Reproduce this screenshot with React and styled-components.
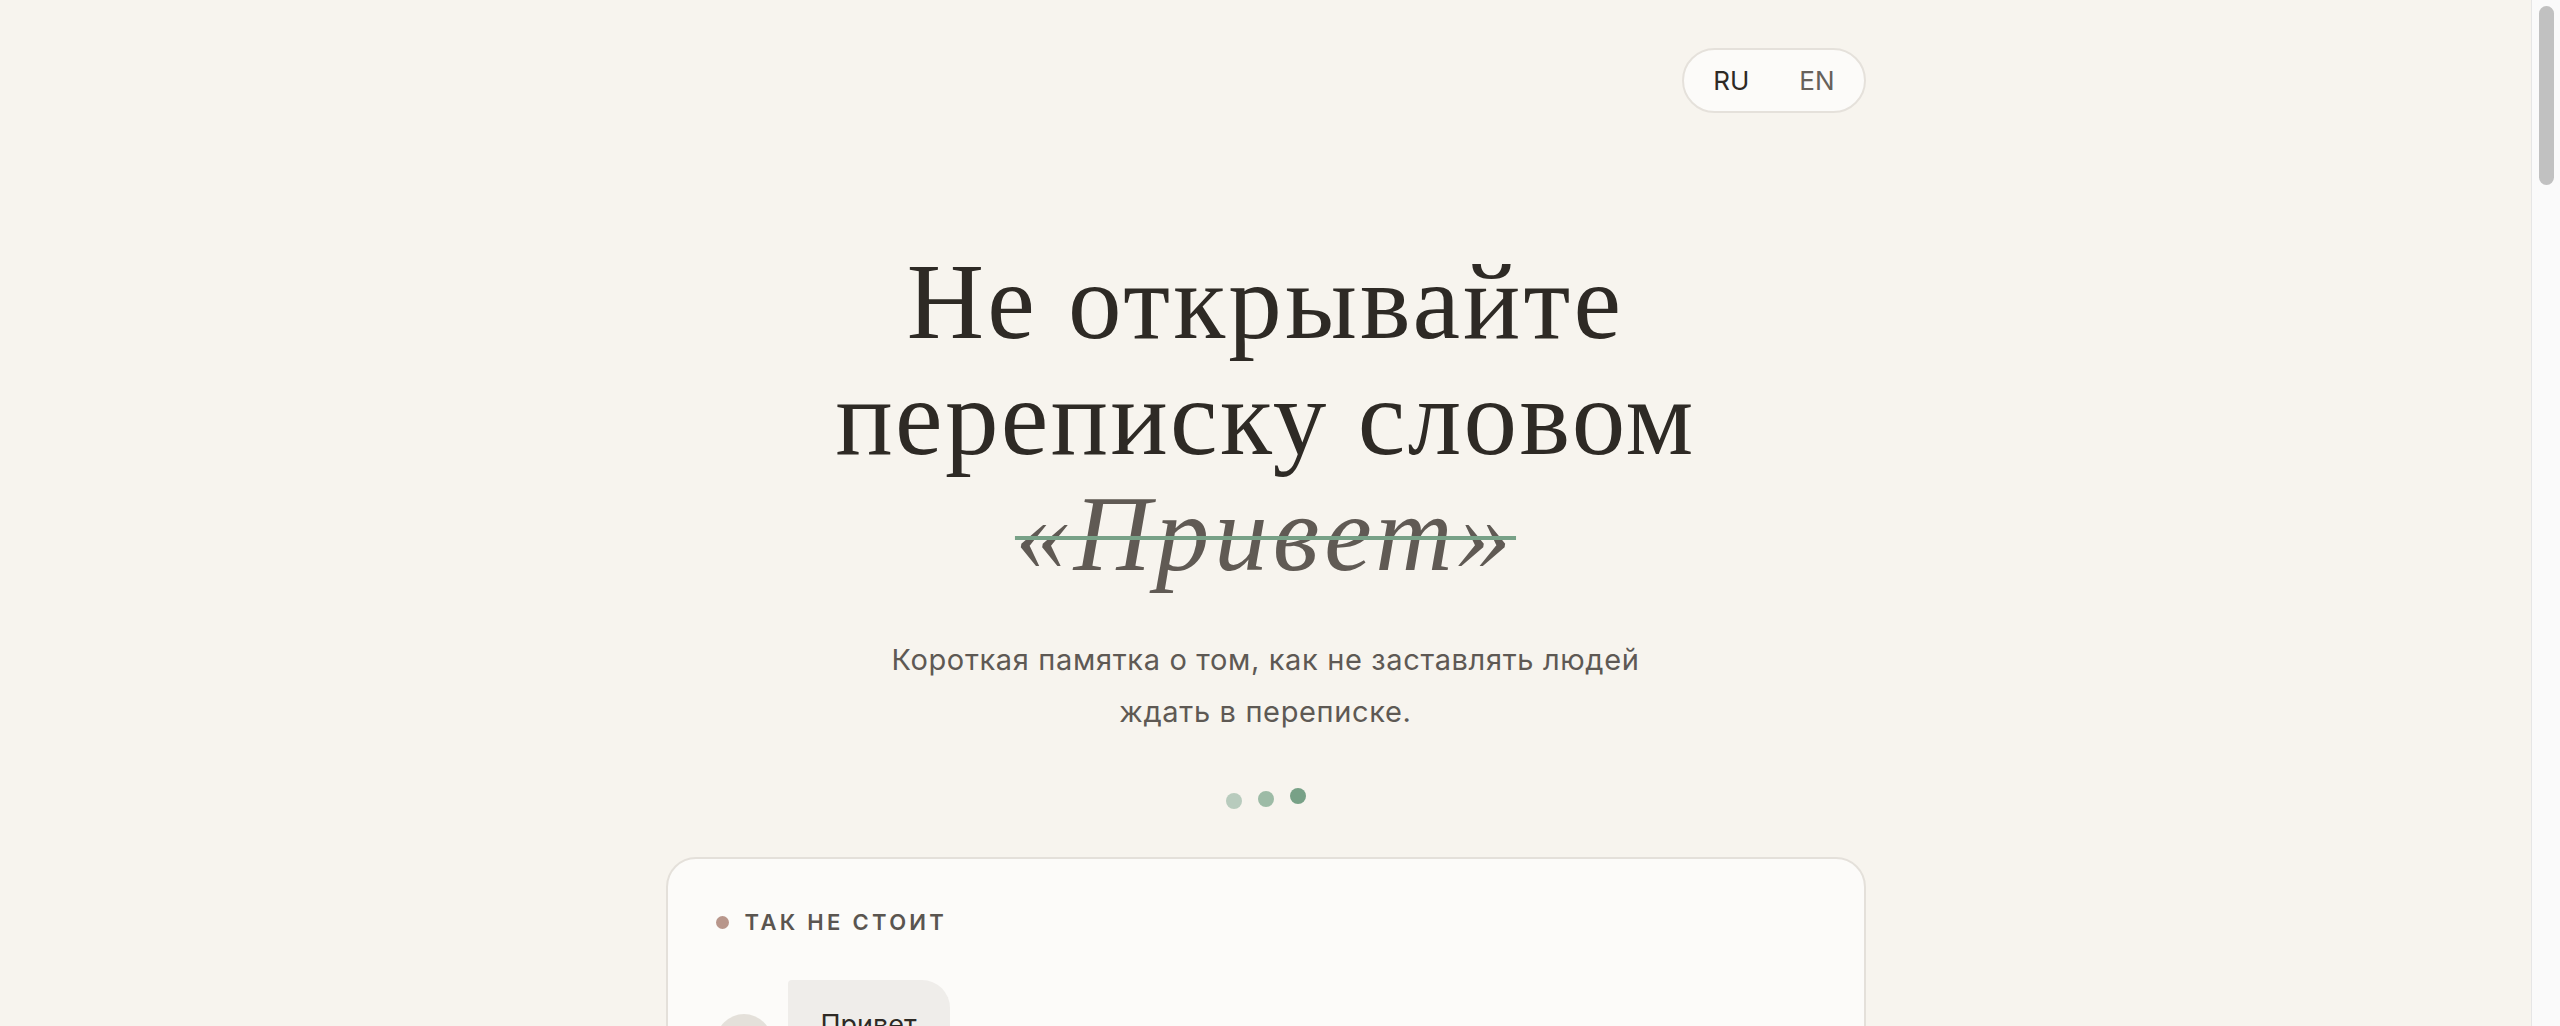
import React from "react";
import styled, { createGlobalStyle } from "styled-components";

const GlobalStyle = createGlobalStyle`
  html, body {
    margin: 0;
    padding: 0;
    height: 100%;
    overflow: hidden;
    background: #f7f4ee;
  }
  body {
    font-family: Inter, "Noto Sans", "Liberation Sans", sans-serif;
    color: #2e2a25;
    -webkit-font-smoothing: antialiased;
  }
  * {
    box-sizing: border-box;
  }
`;

// window frame: scrolling page + the browser's scroll rail on the right
const Shell = styled.div`
  display: flex;
  height: 100vh;
`;

const Main = styled.main`
  flex: 1;
  overflow-y: auto;
  scrollbar-width: none;
  &::-webkit-scrollbar {
    display: none;
  }
`;

const ScrollRail = styled.div`
  flex: none;
  width: 29px;
  padding: 6px 6px 0 7px;
  background: #fafafa;
  border-left: 1px solid #e6e6e6;
`;

const ScrollThumb = styled.div`
  height: 179px;
  border-radius: 8px;
  background: #c1c1c1;
`;

const Page = styled.div`
  min-height: 5500px;
  padding: 48px 0 160px;
`;

const Container = styled.div`
  width: 1200px;
  margin: 0 auto;
`;

const TopBar = styled.header`
  display: flex;
  justify-content: flex-end;
`;

const LangSwitch = styled.div`
  display: flex;
  align-items: center;
  height: 65px;
  padding: 0 4px;
  border: 2px solid #e5e1db;
  border-radius: 40px;
  background: #fcfbf9;
`;

const LangButton = styled.button`
  border: none;
  background: none;
  padding: 0 25px;
  font-family: Inter, "Noto Sans", sans-serif;
  font-size: 26px;
  line-height: 1;
  color: ${(p) => (p.$active ? "#2e2a25" : "#66615b")};
  cursor: pointer;
`;

const Hero = styled.section`
  margin-top: 131px;
  text-align: center;
`;

const Title = styled.h1`
  margin: 0;
  font-family: "Liberation Serif", "DejaVu Serif", serif;
  font-weight: 400;
  font-size: 107px;
  line-height: 116px;
  color: #2e2a25;
  letter-spacing: 2.4px;
`;

const TitleLine = styled.span`
  display: block;
  letter-spacing: ${(p) => p.$spacing || "inherit"};
`;

const Struck = styled.span`
  font-style: italic;
  color: #605a54;
  letter-spacing: 5px;
  text-decoration: line-through;
  text-decoration-color: #78a187;
  text-decoration-thickness: 4px;
`;

const Lead = styled.p`
  margin: 42px auto 0;
  max-width: 800px;
  font-size: 29px;
  line-height: 52px;
  letter-spacing: 0.65px;
  color: #5e5954;
`;

const Typing = styled.div`
  display: flex;
  justify-content: center;
  gap: 16px;
  margin-top: 52px;
`;

const Dot = styled.span`
  width: 16px;
  height: 16px;
  border-radius: 50%;
  background: ${(p) => p.$tone};
  transform: translateY(${(p) => p.$shift}px);
`;

const Card = styled.section`
  margin-top: 51px;
  padding: 52px 48px 56px;
  border: 2px solid #e4e0da;
  border-radius: 30px;
  background: #fcfbf9;
`;

const Label = styled.div`
  display: flex;
  align-items: center;
  gap: 16px;
  font-size: 22px;
  line-height: 22px;
  font-weight: 600;
  letter-spacing: 0.15em;
  text-transform: uppercase;
  color: #5a5550;
`;

const LabelDot = styled.span`
  width: 13px;
  height: 13px;
  border-radius: 50%;
  background: ${(p) => p.$color};
`;

const Thread = styled.div`
  display: flex;
  flex-direction: column;
  gap: 20px;
  margin-top: 47px;
`;

const MessageRow = styled.div`
  display: flex;
  align-items: flex-end;
  gap: 16px;
  flex-direction: ${(p) => (p.$mine ? "row-reverse" : "row")};
`;

const Avatar = styled.div`
  flex: none;
  width: 56px;
  height: 56px;
  border-radius: 50%;
  background: #e4e0da;
`;

const Bubble = styled.div`
  max-width: 720px;
  padding: 25px 33px;
  border-radius: ${(p) => (p.$mine ? "28px 4px 28px 28px" : "4px 28px 28px 28px")};
  background: ${(p) => (p.$mine ? "#e6eee8" : "#efedea")};
  font-size: 27px;
  line-height: 40px;
  color: #2e2a25;
`;

const Note = styled.p`
  margin: 36px 0 0;
  font-size: 24px;
  line-height: 38px;
  color: #7a746d;
`;

const Tips = styled.ol`
  margin: 40px 0 0;
  padding: 0 0 0 36px;
  font-size: 27px;
  line-height: 44px;
  color: #3f3a35;

  li + li {
    margin-top: 18px;
  }
`;

const Footer = styled.footer`
  margin-top: 120px;
  text-align: center;
  font-size: 22px;
  color: #8a847d;
`;

const Thread1 = () => (
  <Thread>
    <MessageRow>
      <Avatar />
      <Bubble>Привет</Bubble>
    </MessageRow>
    <MessageRow $mine>
      <Avatar />
      <Bubble $mine>Привет! Что-то случилось?</Bubble>
    </MessageRow>
    <MessageRow>
      <Avatar />
      <Bubble>Да так, хотел кое-что спросить</Bubble>
    </MessageRow>
  </Thread>
);

const Thread2 = () => (
  <Thread>
    <MessageRow>
      <Avatar />
      <Bubble>
        Привет! Можешь до пятницы прислать макет главной страницы? Хочу
        показать его клиенту на встрече.
      </Bubble>
    </MessageRow>
    <MessageRow $mine>
      <Avatar />
      <Bubble $mine>Да, пришлю в четверг вечером.</Bubble>
    </MessageRow>
  </Thread>
);

const App = () => {
  return (
    <>
      <GlobalStyle />
      <Shell>
        <Main>
          <Page>
            <Container>
              <TopBar>
                <LangSwitch>
                  <LangButton $active>RU</LangButton>
                  <LangButton>EN</LangButton>
                </LangSwitch>
              </TopBar>

              <Hero>
                <Title>
                  <TitleLine $spacing="3.2px">Не открывайте</TitleLine>
                  <TitleLine>переписку словом</TitleLine>
                  <TitleLine>
                    <Struck>«Привет»</Struck>
                  </TitleLine>
                </Title>
                <Lead>
                  Короткая памятка о том, как не заставлять людей ждать в
                  переписке.
                </Lead>
                <Typing>
                  <Dot $tone="#b8cbbd" $shift={3} />
                  <Dot $tone="#9dbba6" $shift={1} />
                  <Dot $tone="#78a187" $shift={-2} />
                </Typing>
              </Hero>

              <Card>
                <Label>
                  <LabelDot $color="#b8968b" />
                  Так не стоит
                </Label>
                <Thread1 />
                <Note>
                  Собеседник видит «Привет» и ждёт. Вы печатаете. Он ждёт ещё.
                </Note>
              </Card>

              <Card>
                <Label>
                  <LabelDot $color="#78a187" />
                  Так лучше
                </Label>
                <Thread2 />
                <Note>
                  Приветствие и вопрос в одном сообщении — ответ приходит
                  сразу.
                </Note>
              </Card>

              <Card>
                <Label>
                  <LabelDot $color="#9dbba6" />
                  Коротко
                </Label>
                <Tips>
                  <li>Поздоровайтесь и сразу напишите, зачем пишете.</li>
                  <li>Соберите вопрос в одно сообщение, а не в пять.</li>
                  <li>Добавьте контекст: ссылки, сроки, что уже пробовали.</li>
                  <li>Не ждите ответа на «Привет», чтобы задать вопрос.</li>
                </Tips>
              </Card>

              <Footer>nohello — памятка о переписке</Footer>
            </Container>
          </Page>
        </Main>
        <ScrollRail aria-hidden="true">
          <ScrollThumb />
        </ScrollRail>
      </Shell>
    </>
  );
};

export default App;
